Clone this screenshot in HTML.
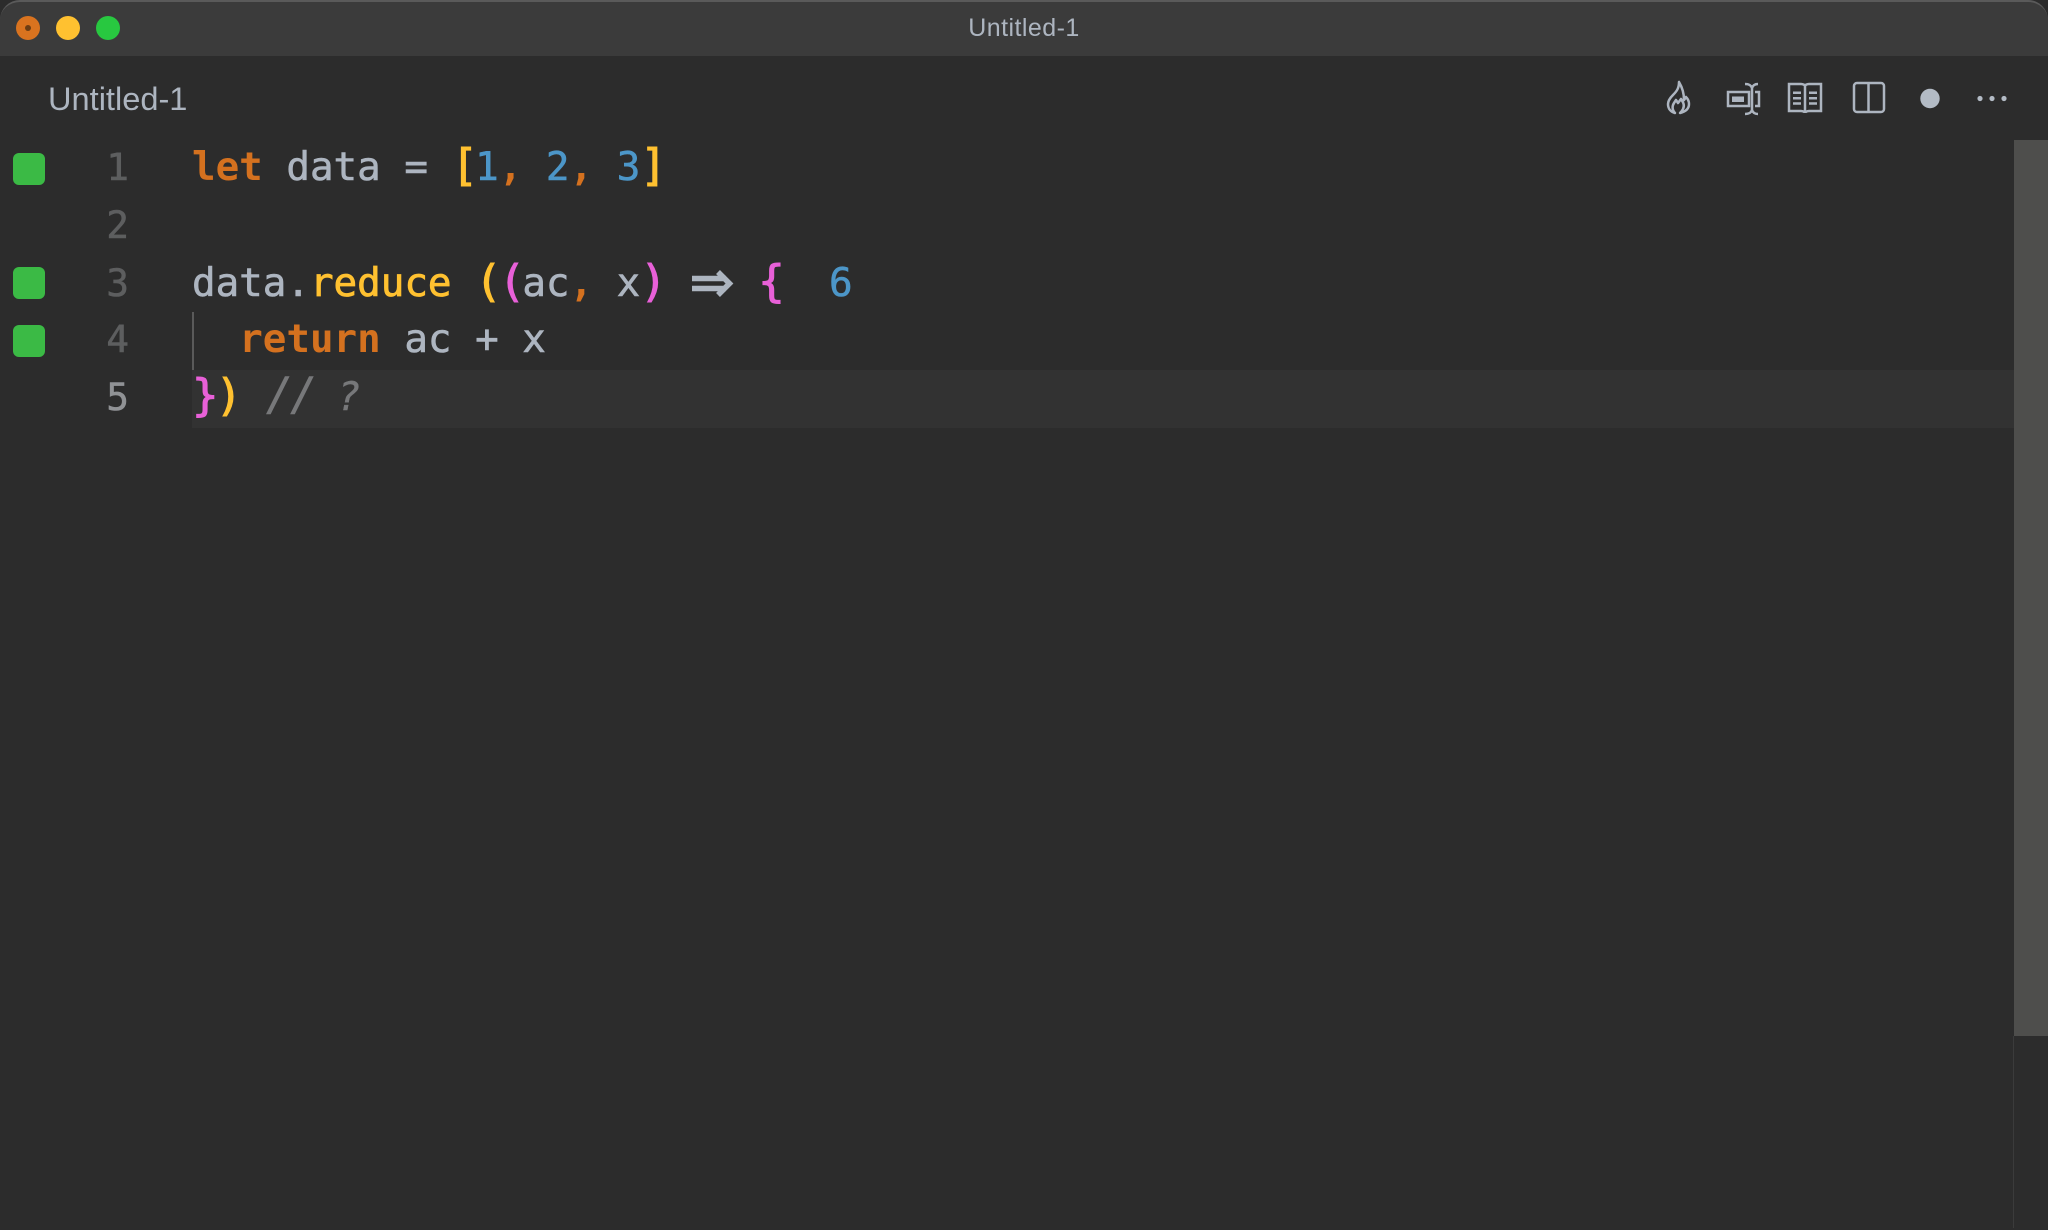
<!DOCTYPE html>
<html lang="en"><head><meta charset="utf-8"><title>Untitled-1</title>
<style>
html,body{margin:0;padding:0;width:2048px;height:1230px;overflow:hidden;background:#2c2c2c}
.abs{position:absolute}
#tb{left:0;top:0;width:2048px;height:56px;background:#3b3b3b;border-radius:20px 20px 0 0;border-top:2px solid #5a5a5a;box-sizing:border-box}
.t{position:absolute;font-family:"Liberation Sans",sans-serif;white-space:pre;color:#adb5c0}
.l{position:absolute;left:192px;font:39.2px/46px "DejaVu Sans Mono",monospace;white-space:pre;color:#adb5c0;height:46px;-webkit-text-stroke:.6px currentColor}
.n{position:absolute;left:105px;width:24px;text-align:right;font:37.5px/46px "DejaVu Sans Mono",monospace;color:#5d5e5f;-webkit-text-stroke:.6px currentColor}
.g{position:absolute;left:13px;width:32px;height:32px;border-radius:6px;background:#3bba45}
.k{color:#d4711f;font-weight:bold;-webkit-text-stroke:0}.y{color:#ffc130}.b{color:#4c96c8}.p{color:#e860d8}.o{color:#d4711f;font-weight:bold;-webkit-text-stroke:0}
.f{color:#ffc130;-webkit-text-stroke:.8px #ffc130}
.br{display:inline-block;width:23.6px;text-align:center;font-size:44px;line-height:0;-webkit-text-stroke:1.1px currentColor}
.c{position:absolute;color:#77787a;font-style:italic;font-family:"DejaVu Sans Mono",monospace;white-space:pre;-webkit-text-stroke:.4px #77787a}
</style></head><body>
<div class="abs" id="tb"></div>
<div class="abs" style="left:16px;top:15.5px;width:24px;height:24px;border-radius:50%;background:#d9731f"></div>
<div class="abs" style="left:25px;top:24.5px;width:6px;height:6px;border-radius:50%;background:#6b3d14"></div>
<div class="abs" style="left:56px;top:15.5px;width:24px;height:24px;border-radius:50%;background:#ffc130"></div>
<div class="abs" style="left:96px;top:15.5px;width:24px;height:24px;border-radius:50%;background:#28c840"></div>
<div class="t" style="left:0;width:2048px;text-align:center;top:12px;font-size:25px;line-height:32px;letter-spacing:.45px">Untitled-1</div>
<div class="t" style="left:48px;top:80px;font-size:32.6px;line-height:38px">Untitled-1</div>

<svg class="abs" style="left:0;top:0" width="2048" height="140" fill="none" stroke="#adb5c0" stroke-width="2.5">
<path d="M1679 82c0 6-2 9-6 13-3 3-5 6-5 9 0 5 3 8 7 9-3-3-3-7-1-10l2-3 2 3 3-4c2 3 4 6 2 10-1 2-2 3-3 4 4-1 9-3 9-9 0-3-1-5-3-7l-2 3c0-6-2-13-5-18z" stroke-linejoin="round"/>
<path d="M1728 92h21v14h-21zM1755 92h4v14h-4M1745 84c4 0 6 1 7 4 1-3 3-4 6-4M1752 88v22M1745 114c4 0 6-1 7-4 1 3 3 4 6 4"/>
<rect x="1732" y="96.500" width="12" height="5.500" fill="#adb5c0" stroke="none"/>
<path d="M1789 84h12c2 0 4 1 4 2 0-1 2-2 4-2h12v27h-12c-2 0-4 1-4 2 0-1-2-2-4-2h-12zM1805 86v27"/>
<path d="M1793 92.700h8M1793 98.200h8M1793 103.500h8M1809 92.700h8M1809 98.200h8M1809 103.500h8"/>
<rect x="1854" y="83" width="30" height="29" rx="3"/><path d="M1868.500 83v29"/>
<circle cx="1930" cy="98.500" r="9.700" fill="#b3bbc5" stroke="none"/>
<g fill="#b3bbc5" stroke="none"><circle cx="1980" cy="98.500" r="2.600"/><circle cx="1992" cy="98.500" r="2.600"/><circle cx="2004" cy="98.500" r="2.600"/></g>
</svg>

<div class="abs" style="left:192px;top:370px;width:1822px;height:58px;background:#323232"></div>
<div class="abs" style="left:192px;top:312px;width:2px;height:58px;background:#5a5a5a"></div>
<div class="abs" style="left:2014px;top:140px;width:34px;height:896px;background:#4e4e4c"></div>
<div class="abs" style="left:2013px;top:1036px;width:1px;height:192px;background:#3b3b3b"></div>

<div class="g" style="top:153px"></div><div class="g" style="top:267px"></div><div class="g" style="top:325px"></div>

<div class="n" style="top:144px">1</div>
<div class="n" style="top:201.500px">2</div>
<div class="n" style="top:259.500px">3</div>
<div class="n" style="top:316px">4</div>
<div class="n" style="top:374px;color:#909295">5</div>

<div class="l" style="top:145px"><span class="k">let</span> data = <span class="y br">[</span><span class="b">1</span><span class="o">,</span> <span class="b">2</span><span class="o">,</span> <span class="b">3</span><span class="y br">]</span></div>
<div class="l" style="top:260.500px">data.<span class="f">reduce</span> <span class="y br">(</span><span class="p br">(</span>ac<span class="o">,</span> x<span class="p br">)</span>    <span class="p br">{</span>  <span class="b">6</span></div>
<div class="l" style="top:317px">  <span class="k">return</span> ac + x</div>
<div class="l" style="top:375px"><span class="p br">}</span><span class="y br">)</span></div>
<div class="c" style="left:266px;top:372px;font-size:45px;line-height:46px;letter-spacing:-3px">//</div>
<div class="c" style="left:337px;top:375px;font-size:39.2px;line-height:46px">?</div>

<svg class="abs" style="left:688px;top:265px" width="50" height="36" fill="none" stroke="#adb5c0" stroke-width="5.500">
<path d="M4 13.500h34M4 23.500h34M30 7l11.500 11.500-11.500 11.500"/>
</svg>
</body></html>
